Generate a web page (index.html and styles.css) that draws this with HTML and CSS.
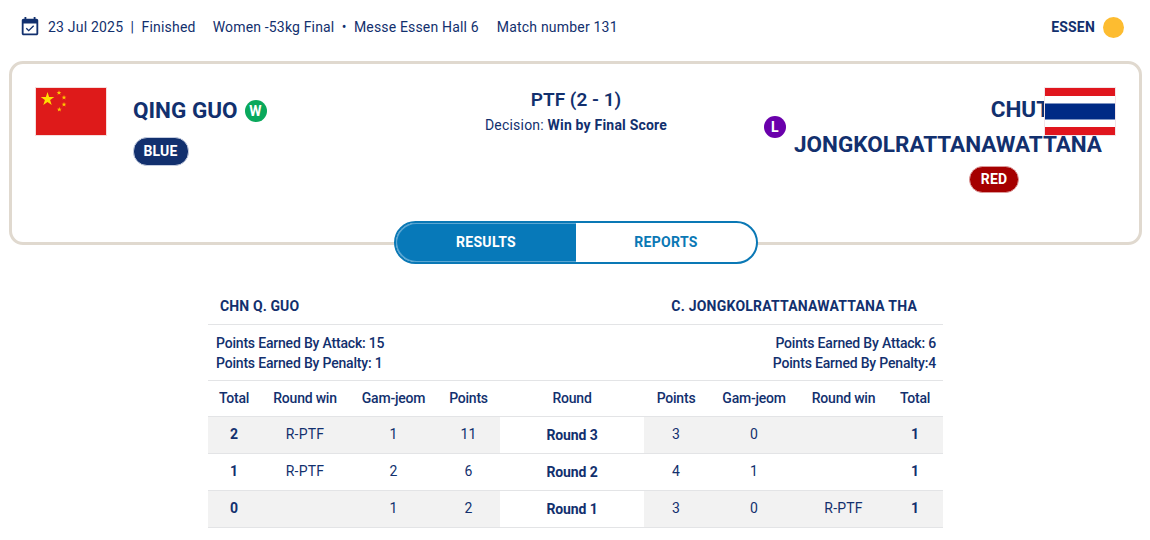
FILE: index.html
```html
<!DOCTYPE html>
<html lang="en">
<head>
<meta charset="utf-8">
<title>Match 131</title>
<link rel="stylesheet" href="styles.css">
</head>
<body>
<header class="topbar">
  <div class="meta">
    <svg class="cal" viewBox="0 0 24 24"><path fill="currentColor" d="M16.53 11.06L15.47 10l-4.88 4.88-2.12-2.12-1.06 1.06L10.59 17l5.94-5.94zM19 3h-1V1h-2v2H8V1H6v2H5c-1.11 0-1.99.9-1.99 2L3 19c0 1.1.89 2 2 2h14c1.1 0 2-.9 2-2V5c0-1.1-.9-2-2-2zm0 16H5V8h14v11z"/><path fill="currentColor" d="M4 4h16v4H4z"/></svg>
    <span class="date">23 Jul 2025&nbsp; | &nbsp;Finished</span>
    <span class="event">Women -53kg Final &nbsp;•&nbsp; Messe Essen Hall 6</span>
    <span class="matchno">Match number 131</span>
  </div>
  <div class="city"><span>ESSEN</span><i class="dot"></i></div>
</header>

<section class="card">
  <svg class="flag flag-left" viewBox="0 0 72 49">
    <rect width="72" height="49" fill="#f6dcdc"/>
    <rect x="1" y="1" width="70" height="47" fill="#de1a1a"/>
    <polygon fill="#ffde00" points="12.5,5 14.1,10 19.3,10 15.1,13.1 16.7,18.1 12.5,15 8.3,18.1 9.9,13.1 5.7,10 10.9,10"/>
    <polygon fill="#ffc800" points="24,3.2 24.6,4.9 26.4,4.9 25,6 25.5,7.8 24,6.7 22.5,7.8 23,6 21.6,4.9 23.4,4.9"/>
    <polygon fill="#ffc800" points="29,8 29.6,9.7 31.4,9.7 30,10.8 30.5,12.6 29,11.5 27.5,12.6 28,10.8 26.6,9.7 28.4,9.7"/>
    <polygon fill="#ffc800" points="29,15 29.6,16.7 31.4,16.7 30,17.8 30.5,19.6 29,18.5 27.5,19.6 28,17.8 26.6,16.7 28.4,16.7"/>
    <polygon fill="#ffc800" points="24.3,20 24.9,21.7 26.7,21.7 25.3,22.8 25.8,24.6 24.3,23.5 22.8,24.6 23.3,22.8 21.9,21.7 23.7,21.7"/>
  </svg>
  <svg class="flag flag-right" viewBox="0 0 72 49">
    <rect width="72" height="49" fill="#f3e4e8"/>
    <rect x="1" y="1" width="70" height="47" fill="#fff"/>
    <rect x="1" y="1" width="70" height="8" fill="#e0161e"/>
    <rect x="1" y="40" width="70" height="8" fill="#e0161e"/>
    <rect x="1" y="16.5" width="70" height="16" fill="#002a85"/>
  </svg>

  <div class="side side-left">
    <div class="name-row">
      <h2 class="name">QING GUO</h2>
      <span class="result result-win">W</span>
    </div>
    <span class="corner corner-blue">BLUE</span>
  </div>

  <div class="centre">
    <div class="score">PTF (2 - 1)</div>
    <div class="decision">Decision: <b>Win by Final Score</b></div>
  </div>

  <div class="side side-right">
    <div class="name-row name-row-right">
      <span class="result result-loss">L</span>
      <h2 class="name name-right">CHUTIKAN JONGKOLRATTANAWATTANA</h2>
    </div>
    <span class="corner corner-red">RED</span>
  </div>

  <nav class="tabs">
    <a class="tab tab-active">RESULTS</a>
    <a class="tab">REPORTS</a>
  </nav>
</section>

<table class="results">
  <colgroup>
    <col class="c52"><col class="c90"><col class="c87"><col class="c63"><col class="c144"><col class="c64"><col class="c92"><col class="c87"><col class="c56">
  </colgroup>
  <thead>
    <tr class="players">
      <th colspan="4" class="player-left">CHN Q. GUO</th>
      <th></th>
      <th colspan="4" class="player-right">C. JONGKOLRATTANAWATTANA THA</th>
    </tr>
    <tr class="earned">
      <th colspan="4" class="earned-left">Points Earned By Attack: 15<br>Points Earned By Penalty: 1</th>
      <th></th>
      <th colspan="4" class="earned-right">Points Earned By Attack: 6<br>Points Earned By Penalty:4</th>
    </tr>
    <tr class="heads">
      <th>Total</th><th>Round win</th><th>Gam-jeom</th><th>Points</th><th>Round</th><th>Points</th><th>Gam-jeom</th><th>Round win</th><th>Total</th>
    </tr>
  </thead>
  <tbody>
    <tr class="shade"><td class="strong">2</td><td>R-PTF</td><td>1</td><td>11</td><td class="round">Round 3</td><td>3</td><td>0</td><td></td><td class="strong">1</td></tr>
    <tr><td class="strong">1</td><td>R-PTF</td><td>2</td><td>6</td><td class="round">Round 2</td><td>4</td><td>1</td><td></td><td class="strong">1</td></tr>
    <tr class="shade"><td class="strong">0</td><td></td><td>1</td><td>2</td><td class="round">Round 1</td><td>3</td><td>0</td><td>R-PTF</td><td class="strong">1</td></tr>
  </tbody>
</table>
</body>
</html>
```

FILE: styles.css
```css
* { box-sizing: border-box; }
html, body { margin: 0; padding: 0; }
body {
  width: 1150px;
  height: 540px;
  overflow: hidden;
  background: #fff;
  color: #12306e;
  font-family: Roboto, "Liberation Sans", sans-serif;
  font-size: 14px;
  letter-spacing: .2px;
}
.topbar {
  display: flex;
  justify-content: space-between;
  align-items: center;
  height: 54px;
  padding: 0 26px 0 19px;
}
.meta { display: flex; align-items: center; }
.cal { width: 22px; height: 22px; margin-right: 7px; color: #12306e; }
.date { margin-right: 17px; }
.event { margin-right: 18px; letter-spacing: .17px; }
.city { display: flex; align-items: center; gap: 8px; font-weight: 700; font-size: 14px; }
.dot { width: 21px; height: 21px; border-radius: 50%; background: #fdbc30; }

.card {
  position: relative;
  display: grid;
  grid-template-columns: 293px 300px 1fr;
  width: 1133px;
  height: 184px;
  margin: 7px 0 0 9px;
  border: 3px solid #e0d9cf;
  border-radius: 14px;
  padding: 0 37px 0 121px;
}
.flag { position: absolute; top: 23px; width: 72px; height: 49px; }
.flag-left { left: 23px; }
.flag-right { right: 23px; }

.side-left { padding-top: 29px; }
.name-row { display: flex; align-items: center; gap: 7px; }
.name { margin: 0; font-size: 22.5px; font-weight: 700; line-height: 35px; letter-spacing: 0; }
.result {
  display: flex;
  align-items: center;
  justify-content: center;
  width: 22px;
  height: 22px;
  border-radius: 50%;
  color: #fff;
  font-size: 14px;
  font-weight: 700;
  flex: none;
}
.result-win { background: #0aa85c; }
.result-loss { background: #6a00ab; margin-right: 1px; }
.corner {
  display: inline-block;
  border-radius: 14px;
  color: #fff;
  font-weight: 700;
  text-align: center;
}
.corner-blue {
  width: 56px;
  height: 29px;
  line-height: 26px;
  margin-top: 9px;
  margin-left: -.5px;
  background: #12306e;
  border: 1px solid #c5cde0;
}
.corner-red {
  width: 50px;
  height: 27px;
  line-height: 25px;
  margin: 4px 83px 0 0;
  background: #a50000;
  border: 1px solid #dc9a9a;
}

.centre { text-align: center; padding-top: 23px; }
.score { font-size: 19px; font-weight: 600; line-height: 25px; letter-spacing: 0; }
.decision { font-size: 14px; line-height: 20px; margin-top: 3px; }
.decision b { font-weight: 700; }

.side-right { display: flex; flex-direction: column; align-items: flex-end; padding-top: 28px; }
.name-row-right { justify-content: flex-end; }
.name-right { text-align: right; width: 308px; }

.tabs {
  position: absolute;
  left: 382px;
  top: 157px;
  display: flex;
  width: 364px;
  height: 43px;
  border: 2px solid #0a78b5;
  border-radius: 22px;
  overflow: hidden;
  background: #fff;
  font-weight: 700;
  letter-spacing: .3px;
}
.tab {
  flex: 1;
  display: flex;
  align-items: center;
  justify-content: center;
  padding-bottom: 1px;
  color: #0a78b5;
}
.tab-active {
  background: #0779b9;
  color: #fff;
  border-radius: 20px 0 0 20px;
  box-shadow: inset 1px 1px 0 #5ba6d2, inset 1px -1px 0 #5ba6d2;
}

.results {
  table-layout: fixed;
  width: 735px;
  margin: 43px 0 0 208px;
  border-collapse: collapse;
}
.c52 { width: 52px; }
.c90 { width: 90px; }
.c87 { width: 87px; }
.c63 { width: 63px; }
.c144 { width: 144px; }
.c64 { width: 64px; }
.c92 { width: 92px; }
.c56 { width: 56px; }
.results th, .results td { padding: 0; text-align: center; }
.results th { font-weight: 500; }
.results .heads th { letter-spacing: -.22px; }
.results .earned th { letter-spacing: -.19px; }
.results tr { border-bottom: 1px solid #e3e4e6; }
.results .players th { height: 36px; font-weight: 700; letter-spacing: .22px; padding-top: 1px; }
.results .players .player-left { text-align: left; padding-left: 12px; letter-spacing: .12px; }
.results .player-right { text-align: right; padding-right: 26px; }
.results .earned th { height: 56px; line-height: 20px; padding-top: 1px; }
.results .earned-left { text-align: left; padding-left: 8px; }
.results .earned-right { text-align: right; padding-right: 7px; }
.heads th { height: 36px; }
.results td { height: 37px; padding-bottom: 2px; }
.shade td { background: #f2f2f2; }
.results td.round { background: #fff; font-weight: 700; padding-bottom: 0; letter-spacing: -.1px; }
.results td.strong { font-weight: 700; }
```
